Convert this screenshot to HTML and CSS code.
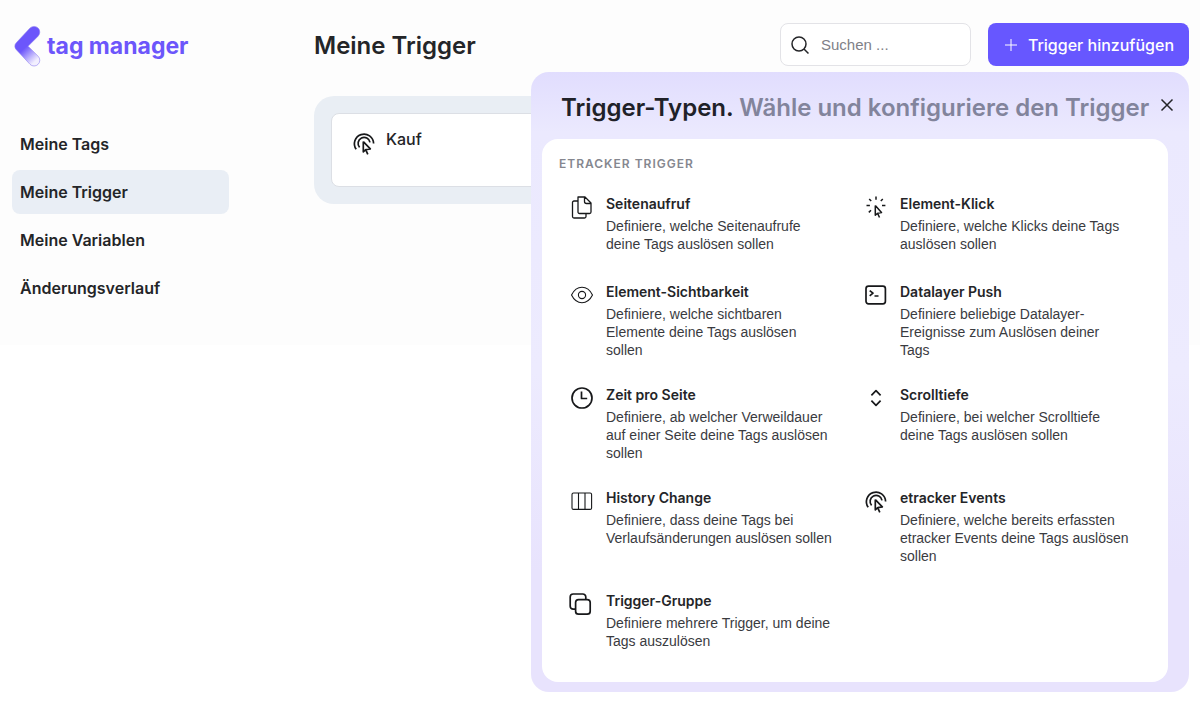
FILE: index.html
```html
<!DOCTYPE html>
<html lang="de">
<head>
<meta charset="utf-8">
<meta name="viewport" content="width=device-width, initial-scale=1">
<title>Meine Trigger – tag manager</title>
<link rel="stylesheet" href="styles.css">
</head>
<body>
<svg class="sprite" aria-hidden="true">
  <symbol id="touch" viewBox="0 0 24 24">
    <path d="M4.2 18.3A9.6 9.6 0 1 1 21.6 12.6M7.6 16.4A6 6 0 1 1 18 11.4" />
    <path d="M11.3 10.6v10.2l2.4-2.1 2.1 4.6M11.3 10.6l7 7.2-4.6.9" />
  </symbol>
</svg>
<div class="app">
  <aside class="sidebar">
    <a class="logo" href="#">
      <svg class="logo-mark" viewBox="0 0 28 42" aria-hidden="true">
        <defs>
          <linearGradient id="fade" gradientUnits="userSpaceOnUse" x1="10" y1="24" x2="22" y2="37">
            <stop offset="0" stop-color="#6c56fb"/>
            <stop offset="1" stop-color="#f2effe"/>
          </linearGradient>
        </defs>
        <path d="M16.600 2.400a5.900 5.900 0 0 1 8.400 8.400L14.600 21.200 25 31.600a5.900 5.900 0 0 1-8.400 8.400L2.400 24.800a5 5 0 0 1 0-7.200z" fill="url(#fade)" stroke="#8d7df0" stroke-width=".6"/>
      </svg>
      <span>tag manager</span>
    </a>
    <nav class="nav" aria-label="Hauptnavigation">
      <a href="#">Meine Tags</a>
      <a class="active" href="#" aria-current="page">Meine Trigger</a>
      <a href="#">Meine Variablen</a>
      <a href="#">Änderungsverlauf</a>
    </nav>
  </aside>
  <main class="main">
    <header class="header">
      <h1>Meine Trigger</h1>
      <label class="search">
        <svg class="search-icon" viewBox="0 0 20 20" aria-hidden="true"><circle cx="9" cy="9" r="7"/><path d="M14 14l4.500 4.500"/></svg>
        <input type="search" placeholder="Suchen ..." aria-label="Suchen">
      </label>
      <div class="add">
        <button class="add-button" type="button" aria-expanded="true">
          <svg viewBox="0 0 12 12" aria-hidden="true"><path d="M6 0v12M0 6h12"/></svg>
          <span>Trigger hinzufügen</span>
        </button>
        <section class="panel" aria-labelledby="panel-title">
          <div class="panel-head">
            <h2 id="panel-title">Trigger-Typen. <span>Wähle und konfiguriere den Trigger</span></h2>
            <button class="close" type="button" aria-label="Schließen">
              <svg viewBox="0 0 14 14" aria-hidden="true"><path d="M1.500 1.500l11 11M12.500 1.500l-11 11"/></svg>
            </button>
          </div>
          <div class="panel-body">
            <h3>ETRACKER TRIGGER</h3>
            <div class="types">
              <button class="type" type="button">
                <svg class="icon thin" viewBox="0 0 24 24"><path d="M8 2h7l6 6v9a1.500 1.500 0 0 1-1.500 1.500H9.500A1.500 1.500 0 0 1 8 17zM14.500 2v4.500q0 2 2 2H21M8 6H4A1.500 1.500 0 0 0 2.500 7.500v14A1.500 1.500 0 0 0 4 23h10.500a1.500 1.500 0 0 0 1.500-1.500v-3"/></svg>
                <span class="copy"><strong>Seitenaufruf</strong><span>Definiere, welche Seitenaufrufe deine Tags auslösen sollen</span></span>
              </button>
              <button class="type" type="button">
                <svg class="icon click" viewBox="0 0 24 24"><path d="M12 1.500v3.200M2.500 10.500h3.400M18 10.500h3.400M5.200 3.900l2 2.100M18.800 3.900l-2 2.100M7 15.200l-2.200 2.200"/><path d="M11.300 10.600v9.600l2.300-2 1.900 4.300M11.300 10.600l6.200 7-3.900.6"/></svg>
                <span class="copy"><strong>Element-Klick</strong><span>Definiere, welche Klicks deine Tags auslösen sollen</span></span>
              </button>
              <button class="type" type="button">
                <svg class="icon hair" viewBox="0 0 24 24"><path d="M1.500 12C4 7 8 4.300 12 4.300S20 7 22.500 12C20 17 16 19.700 12 19.700S4 17 1.500 12z"/><circle cx="12" cy="12" r="3.600"/></svg>
                <span class="copy"><strong>Element-Sichtbarkeit</strong><span>Definiere, welche sichtbaren Elemente deine Tags auslösen sollen</span></span>
              </button>
              <button class="type" type="button">
                <svg class="icon" viewBox="0 0 24 24"><rect x="2" y="3.200" width="19.400" height="17.600" rx="2.500"/><path d="M5.700 7.600L9 10.200l-3.300 2.700M10.500 13h4"/></svg>
                <span class="copy"><strong>Datalayer Push</strong><span>Definiere beliebige Datalayer-Ereignisse zum Auslösen deiner Tags</span></span>
              </button>
              <button class="type" type="button">
                <svg class="icon" viewBox="0 0 24 24"><circle cx="12" cy="12" r="10"/><path d="M11.500 5.500v7h5.700"/></svg>
                <span class="copy"><strong>Zeit pro Seite</strong><span>Definiere, ab welcher Verweildauer auf einer Seite deine Tags auslösen sollen</span></span>
              </button>
              <button class="type" type="button">
                <svg class="icon" viewBox="0 0 24 24"><path d="M7.400 9.300L12 4.700l4.600 4.600M7.400 14.700l4.600 4.600 4.600-4.600"/></svg>
                <span class="copy"><strong>Scrolltiefe</strong><span>Definiere, bei welcher Scrolltiefe deine Tags auslösen sollen</span></span>
              </button>
              <button class="type" type="button">
                <svg class="icon hair" viewBox="0 0 24 24"><rect x="2" y="4" width="19.600" height="16.400" rx="1.500"/><path d="M8.500 4v16.400M15 4v16.400"/></svg>
                <span class="copy"><strong>History Change</strong><span>Definiere, dass deine Tags bei Verlaufsänderungen auslösen sollen</span></span>
              </button>
              <button class="type" type="button">
                <svg class="icon"><use href="#touch"/></svg>
                <span class="copy"><strong>etracker Events</strong><span>Definiere, welche bereits erfassten etracker Events deine Tags auslösen sollen</span></span>
              </button>
              <button class="type" type="button">
                <svg class="icon group" viewBox="0 0 24 24"><rect x="5.600" y="7.600" width="14.600" height="14.600" rx="3"/><path d="M5.600 17.200H3.200A3 3 0 0 1 .2 14.200V5a3 3 0 0 1 3-3h9.600a3 3 0 0 1 3 3v2.600"/></svg>
                <span class="copy"><strong>Trigger-Gruppe</strong><span>Definiere mehrere Trigger, um deine Tags auszulösen</span></span>
              </button>
            </div>
          </div>
        </section>
      </div>
    </header>
    <section class="list">
      <article class="card">
        <svg class="icon"><use href="#touch"/></svg>
        <h2>Kauf</h2>
      </article>
    </section>
  </main>
</div>
</body>
</html>
```
FILE: styles.css
```css
* { box-sizing: border-box; }

body {
  margin: 0;
  min-height: 100vh;
  background: #fff;
  color: #242528;
  font-family: Inter, "Liberation Sans", sans-serif;
}

h1, h2, h3 { margin: 0; font-weight: 600; }
button { font: inherit; color: inherit; border: 0; background: none; padding: 0; cursor: pointer; }
a { color: inherit; text-decoration: none; }
svg { fill: none; stroke: currentColor; flex: none; }

.sprite { position: absolute; width: 0; height: 0; }

.app {
  display: grid;
  grid-template-columns: 217px 1fr;
  column-gap: 85px;
  padding: 23px 11px 35px 12px;
  background: #fdfdfd;
}

.logo {
  display: flex;
  align-items: center;
  gap: 6px;
  height: 46px;
  padding-left: 2px;
  color: #6c56fb;
  font-size: 23px;
  font-weight: 700;
}
.logo-mark { width: 27px; height: 42px; stroke: none; }

.nav { display: grid; gap: 4px; margin-top: 53px; }
.nav a {
  padding: 11px 8px;
  border-radius: 8px;
  font-size: 16px;
  line-height: 22px;
  font-weight: 600;
}
.nav .active { background: #e9eef5; }

.header { display: flex; align-items: center; height: 43px; }
.header h1 { flex: 1; padding-top: 2px; font-size: 24px; line-height: 32px; }

.search {
  display: flex;
  align-items: center;
  gap: 11px;
  width: 191px;
  height: 43px;
  padding: 0 9px;
  border: 1px solid #e3e3e7;
  border-radius: 8px;
  background: #fff;
}
.search-icon { width: 20px; height: 20px; stroke-width: 1.5; }
.search input {
  flex: 1;
  min-width: 0;
  padding: 0;
  border: 0;
  outline: 0;
  background: none;
  font: 400 15px/20px "Liberation Sans", Arial, sans-serif;
}
.search input::placeholder { color: #808187; opacity: 1; }

.add { position: relative; margin-left: 17px; }
.add-button {
  display: flex;
  align-items: center;
  justify-content: space-between;
  width: 201px;
  height: 43px;
  padding: 0 15px 0 17px;
  border-radius: 8px;
  background: #6757ff;
  color: #fff;
  font-size: 16px;
  font-weight: 500;
}
.add-button svg { width: 12px; height: 12px; }

.panel {
  position: absolute;
  top: 49px;
  right: 0;
  z-index: 1;
  width: 658px;
  padding: 0 21px 10px 11px;
  border-radius: 18px;
  background: linear-gradient(#e1ddfe, #ebe9fe 60px, #edebfe 300px, #e8e3fd 500px);
}
.panel-head { display: flex; align-items: center; height: 67px; padding: 4px 0 0 19px; }
.panel-head h2 { flex: 1; font-size: 24px; line-height: 32px; white-space: nowrap; color: #202128; }
.panel-head span { color: #82849c; }
.close { position: absolute; top: 23px; right: 12px; width: 20px; height: 20px; }
.close svg { display: block; width: 14px; height: 14px; margin: 3px; stroke-width: 1.5; }

.panel-body {
  padding: 16px 24px 29px 17px;
  border-radius: 16px;
  background: #fff;
}
.panel-body h3 {
  color: #85878f;
  font-size: 12px;
  line-height: 18px;
  letter-spacing: 1px;
}
.types {
  display: grid;
  grid-template-columns: 266px 266px;
  gap: 25px 28px;
  margin-top: 20px;
  padding-left: 11px;
}
.type {
  display: flex;
  align-items: flex-start;
  gap: 12px;
  min-height: 63px;
  text-align: left;
}
.icon { width: 24px; height: 24px; stroke-width: 1.7; stroke-linejoin: round; }
.type .icon { margin-top: 2px; color: #17181a; }
.thin { stroke-width: 1.3; }
.click { stroke-width: 1.5; }
.hair { stroke-width: 1.1; }
.group { overflow: visible; }
.copy {
  flex: 0 0 230px;
  color: #3a3b3f;
  font: 400 14px/18px "Liberation Sans", Arial, sans-serif;
}
.copy strong {
  display: block;
  margin-bottom: 2px;
  font: 600 14px/22px Inter, "Liberation Sans", sans-serif;
  color: #242528;
}

.list {
  margin-top: 30px;
  padding: 17px;
  border-radius: 20px;
  background: #e9eef4;
}
.card {
  display: flex;
  gap: 10px;
  min-height: 74px;
  padding: 14px 20px;
  border: 1px solid #dcdfe5;
  border-radius: 8px;
  background: #fff;
}
.card .icon { margin-top: 3px; color: #17181a; }
.card h2 { font-size: 16px; line-height: 22px; font-weight: 500; }
```
